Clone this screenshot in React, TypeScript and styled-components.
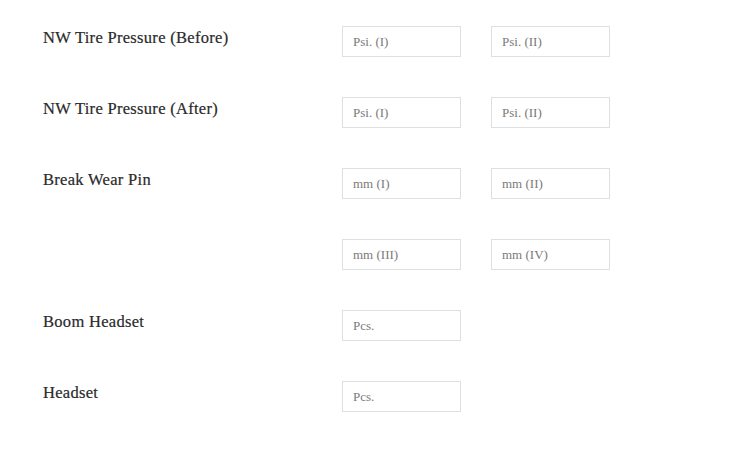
import React from "react";
import styled, {createGlobalStyle} from "styled-components";

const Global = createGlobalStyle`
    html, body {
        margin: 0;
        background: #ffffff;
    }
`;

const Form = styled.form`
    display: flex;
    flex-direction: column;
    gap: 40px;
    padding: 26px 0 0 43px;
`;

const Row = styled.div`
    display: grid;
    grid-template-columns: 299px auto;
    align-items: start;
`;

const Label = styled.label`
    color: #2a2a2a;
    font-family: "Liberation Serif", "DejaVu Serif", serif;
    font-size: 16.5px;
    line-height: 24px;
    letter-spacing: 0.3px;
    -webkit-text-stroke: 0.2px #2a2a2a;
`;

const Fields = styled.div`
    display: flex;
    gap: 30px;
`;

const Field = styled.input`
    box-sizing: border-box;
    width: 119px;
    height: 31px;
    padding: 0 10px;
    border: 1px solid #dde0e3;
    border-radius: 0;
    background: #ffffff;
    color: #555555;
    font-family: "Liberation Serif", "DejaVu Serif", serif;
    font-size: 13px;
    outline: none;

    &::placeholder {
        color: #7a7a7a;
    }
`;

interface RowData {
    label: string;
    fields: string[];
}

const rows: RowData[] = [
    {label: "NW Tire Pressure (Before)", fields: ["Psi. (I)", "Psi. (II)"]},
    {label: "NW Tire Pressure (After)", fields: ["Psi. (I)", "Psi. (II)"]},
    {label: "Break Wear Pin", fields: ["mm (I)", "mm (II)"]},
    {label: "", fields: ["mm (III)", "mm (IV)"]},
    {label: "Boom Headset", fields: ["Pcs."]},
    {label: "Headset", fields: ["Pcs."]},
];

export default function App() {
    return (
        <>
            <Global />
            <Form>
                {rows.map((r, i) => (
                    <Row key={i}>
                        <Label>{r.label}</Label>
                        <Fields>
                            {r.fields.map((f) => (
                                <Field key={f} placeholder={f} />
                            ))}
                        </Fields>
                    </Row>
                ))}
            </Form>
        </>
    );
}
